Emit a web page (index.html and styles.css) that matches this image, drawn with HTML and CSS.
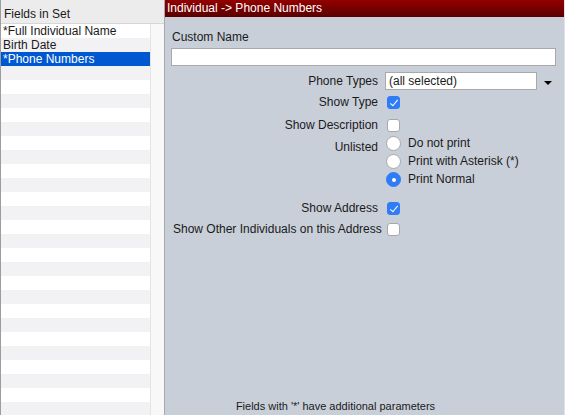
FILE: index.html
```html
<!DOCTYPE html>
<html lang="en">
<head>
  <meta charset="UTF-8">
  <title>Fields in Set</title>
  <link rel="stylesheet" href="styles.css">
</head>
<body>
  <div class="app">
    <!-- Left: list of fields -->
    <aside class="fields">
      <div class="fields-head">Fields in Set</div>
      <div class="fields-body">
        <ul class="field-list">
          <li>*Full Individual Name</li>
          <li>Birth Date</li>
          <li class="selected">*Phone Numbers</li>
        </ul>
        <div class="gutter"></div>
      </div>
    </aside>

    <!-- Right: field options -->
    <main class="panel">
      <div class="panel-title">Individual -&gt; Phone Numbers</div>
      <div class="panel-body">
        <div class="custom-label">Custom Name</div>
        <input type="text" class="text-input">

        <div class="row row-phone">
          <span class="label">Phone Types</span>
          <div class="select">(all selected)</div>
          <span class="caret"></span>
        </div>
        <div class="row row-type">
          <span class="label">Show Type</span>
          <span class="check on"></span>
        </div>
        <div class="row row-desc">
          <span class="label">Show Description</span>
          <span class="check"></span>
        </div>
        <div class="row row-unlisted">
          <span class="label">Unlisted</span>
          <div class="radios">
            <div class="radio-item"><span class="radio"></span>Do not print</div>
            <div class="radio-item"><span class="radio"></span>Print with Asterisk (*)</div>
            <div class="radio-item"><span class="radio on"></span>Print Normal</div>
          </div>
        </div>
        <div class="row row-address">
          <span class="label">Show Address</span>
          <span class="check on"></span>
        </div>
        <div class="row row-other">
          <span class="label">Show Other Individuals on this Address</span>
          <span class="check"></span>
        </div>
      </div>
      <div class="panel-foot">Fields with '*' have additional parameters</div>
    </main>
  </div>
</body>
</html>
```

FILE: styles.css
```css
:root {
  --panel-bg: #c9cfd9;
  --row-alt: #f2f2f4;
  --select-blue: #0058d0;
  --check-blue: #2f7cf6;
  --text: #1a1a1a;
}

* {
  margin: 0;
  padding: 0;
  box-sizing: border-box;
}

body {
  font-family: "Liberation Sans", Arial, sans-serif;
  font-size: 12px;
  color: var(--text);
  background: var(--panel-bg);
}

.app {
  display: flex;
  height: 415px;
}

/* Left list */
.fields {
  width: 165px;
  display: flex;
  flex-direction: column;
  border-left: 1px solid #9d9d9d;
  border-right: 1px solid #a9a9a9;
  background: #fff;
}

.fields-head {
  height: 24px;
  padding: 8px 0 0 3px;
  line-height: 12px;
  background: #ececec;
  border-bottom: 1px solid #d6d6d6;
}

.fields-body {
  flex: 1;
  display: flex;
}

.field-list {
  list-style: none;
  width: 149px;
  background: repeating-linear-gradient(to bottom, #fff 0 14px, var(--row-alt) 14px 28px);
}

.field-list li {
  height: 14px;
  line-height: 14px;
  padding-left: 2px;
  white-space: nowrap;
}

.field-list li.selected {
  background: var(--select-blue);
  color: #fff;
}

.gutter {
  flex: 1;
  background: #f8f8f8;
  border-left: 1px solid #e4e4e4;
}

/* Right panel */
.panel {
  flex: 1;
  display: flex;
  flex-direction: column;
  background: var(--panel-bg);
  border-right: 1px solid #dfe3e9;
}

.panel-title {
  height: 17px;
  line-height: 16px;
  padding-left: 2px;
  color: #fff;
  background: linear-gradient(to bottom, #930000, #5a0000);
}

.panel-body {
  padding: 13px 8px 0 6px;
}

.custom-label {
  line-height: 14px;
  padding-left: 1px;
  margin-bottom: 4px;
}

.text-input {
  display: block;
  width: 100%;
  height: 18px;
  border: 1px solid #a9a9a9;
  background: #fff;
}

.row {
  display: flex;
  align-items: center;
  height: 18px;
}

.label {
  width: 205px;
  margin-left: 2px;
  margin-right: 8px;
  text-align: right;
  white-space: nowrap;
}

.row-phone { margin-top: 6px; }
.row-type { margin-top: 3px; }
.row-desc { margin-top: 5px; }
.row-address { margin-top: 9px; }
.row-other { margin-top: 3px; }

.row-unlisted {
  margin-top: 2px;
  height: auto;
  align-items: flex-start;
}

.row-unlisted .label {
  padding-top: 4px;
}

.select {
  width: 152px;
  height: 18px;
  line-height: 16px;
  padding-left: 3px;
  border: 1px solid #a9a9a9;
  background: #fff;
  margin-left: -1px;
}

.caret {
  margin-left: 7px;
  margin-top: 4px;
  border-left: 4px solid transparent;
  border-right: 4px solid transparent;
  border-top: 4px solid #000;
}

.check {
  width: 13px;
  height: 13px;
  margin-left: 1px;
  border: 1px solid #a8a8a8;
  border-radius: 3px;
  background: #fff;
  position: relative;
}

.check.on {
  background: var(--check-blue);
  border-color: var(--check-blue);
}

.check.on::after {
  content: '';
  position: absolute;
  left: 4px;
  top: 1px;
  width: 3px;
  height: 7px;
  border-right: 1px solid #fff;
  border-bottom: 1px solid #fff;
  transform: rotate(40deg);
}

.radios {
  display: flex;
  flex-direction: column;
}

.radio-item {
  display: flex;
  align-items: flex-start;
  height: 18px;
  line-height: 14px;
}

.radio {
  width: 15px;
  height: 15px;
  margin-right: 7px;
  border: 1px solid #a8a8a8;
  border-radius: 50%;
  background: #fff;
  position: relative;
  flex: none;
}

.radio.on {
  background: var(--check-blue);
  border-color: var(--check-blue);
}

.radio.on::after {
  content: '';
  position: absolute;
  left: 4.5px;
  top: 4.5px;
  width: 4px;
  height: 4px;
  border-radius: 50%;
  background: #fff;
}

.panel-foot {
  margin-top: auto;
  padding: 0 58px 2px 0;
  font-size: 11px;
  line-height: 14px;
  text-align: center;
}
```
